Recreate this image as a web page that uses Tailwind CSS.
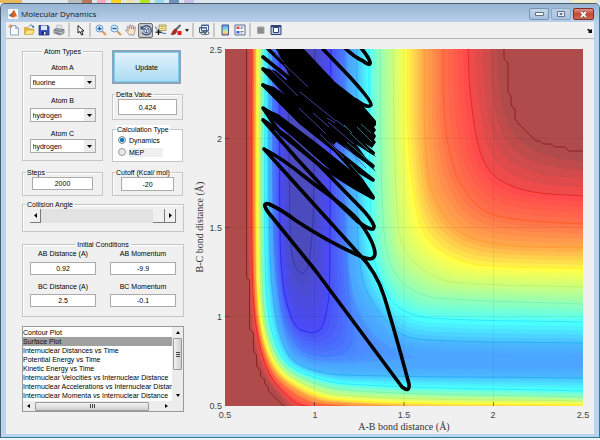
<!doctype html>
<html lang="en">
  <head>
    <meta charset="utf-8" />
    <meta name="viewport" content="width=device-width, initial-scale=1" />
    <title>Molecular Dynamics</title>
    <script src="https://cdn.jsdelivr.net/npm/@tailwindcss/browser@4"></script>
  </head>
  <body
    class="flex min-h-screen flex-col bg-[#eef4f8] font-['Liberation_Sans',sans-serif] text-[7px] leading-[9px] text-black"
  >
    <!-- strip of the window behind -->
    <div class="flex h-[3px] shrink-0 bg-[#dce6ee]">
      <div class="w-[22px] bg-[#e9b85c]"></div>
      <div class="ml-[46px] w-[14px] bg-[#bdbdbd]"></div>
      <div class="w-[10px] bg-[#b9775a]"></div>
      <div class="ml-[5px] w-[9px] bg-[#f7a8c4]"></div>
      <div class="ml-[5px] w-[10px] bg-[#ffd21c]"></div>
      <div class="ml-[5px] w-[9px] bg-[#efe4b0]"></div>
      <div class="ml-[5px] w-[10px] bg-[#b5e61d]"></div>
      <div class="ml-[5px] w-[9px] bg-[#99d9ea]"></div>
      <div class="ml-[5px] w-[10px] bg-[#7092be]"></div>
      <div class="ml-[5px] w-[10px] bg-[#c8bfe7]"></div>
      <div class="ml-auto mr-[4px] w-[24px] bg-[#f3f0c8]"></div>
    </div>

    <div
      class="flex grow flex-col rounded-t-[5px] border border-[#4b5d6b] border-r-[#1f7f98] border-b-[#2f7f92] bg-[#bcd3ee] px-[5px] pb-[3px]"
    >
      <header
        class="-mx-[5px] flex h-[18px] shrink-0 items-start rounded-t-[4px] bg-linear-to-b from-[#98b4d1] to-[#b8d0ea] pr-[5px] pl-[7px]"
      >
        <svg class="mt-[5px] h-[10px] w-[10px]" viewBox="0 0 20 20">
          <path d="M0 0h20v20H0z" fill="#f4f6f8" />
          <path d="M1 12 7 9l3 3-4 4z" fill="#4a86b8" />
          <path d="m7 9 5-7 2 4-3 8-5 2z" fill="#a33a1c" />
          <path d="M12 2c3 3 4 10 7 14-3-3-5 0-8 2l-4-3z" fill="#e2651e" />
        </svg>
        <h1
          class="mt-[4px] ml-[3px] font-['Open_Sans',sans-serif] text-[8px] leading-[11px] text-[#10151c]"
        >
          Molecular Dynamics
        </h1>
        <div class="mt-[4px] ml-auto flex gap-[2px]">
          <button
            aria-label="Minimize"
            class="flex h-[12px] w-[20px] items-center justify-center rounded-[2px] border border-[#7792ae] bg-linear-to-b from-[#c4d6ea] to-[#a6c0db]"
          >
            <svg class="h-[4px] w-[9px]" viewBox="0 0 9 4">
              <path d="M.5 .5h8v3h-8z" fill="#fff" stroke="#62748a" />
            </svg>
          </button>
          <button
            aria-label="Maximize"
            class="flex h-[12px] w-[20px] items-center justify-center rounded-[2px] border border-[#8fa9c5] bg-linear-to-b from-[#bbd0e7] to-[#a9c3df]"
          >
            <svg class="h-[6px] w-[8px]" viewBox="0 0 8 6">
              <path d="M.5 .5h7v5h-7z" fill="#e9f0f7" stroke="#62748a" />
              <path d="M3 2.500h2v1H3z" fill="#8c9fb4" stroke="#62748a" />
            </svg>
          </button>
          <button
            aria-label="Close"
            class="flex h-[12px] w-[21px] items-center justify-center rounded-[2px] border border-[#7c2f2a] bg-linear-to-b from-[#dd9186] via-[#c64734] to-[#cf6a4c]"
          >
            <svg class="h-[7px] w-[9px]" viewBox="0 0 9 7">
              <path d="m2 1 5 5m0-5L2 6" stroke="#6b3a3a" stroke-width="3" />
              <path d="m2 1 5 5m0-5L2 6" stroke="#fff" stroke-width="1.800" />
            </svg>
          </button>
        </div>
      </header>

      <main class="flex grow flex-col bg-[#f0f0f0]">
        <div
          class="flex h-[17px] shrink-0 items-center border-b border-[#b4b4b4] *:shrink-0"
        >
          <button class="grid h-[15px] w-[15px] place-items-center" aria-label="New figure">
            <svg class="h-[12px] w-[12px]" viewBox="0 0 24 24">
              <path d="M5 3h10l6 6v13H5z" fill="#f6fbff" stroke="#6f8fb0" stroke-width="1.500" />
              <path d="M15 3v6h6z" fill="#b4cde6" stroke="#6f8fb0" />
              <path d="M5 0v9M0 5h10M2 2l6 6m0-6L2 8" stroke="#e0906a" stroke-width="1.500" />
            </svg>
          </button>
          <button class="grid h-[15px] w-[15px] place-items-center" aria-label="Open file">
            <svg class="h-[12px] w-[12px]" viewBox="0 0 24 24">
              <path d="M3 20V7h7l2 3h8v10z" fill="#e9b93c" stroke="#b98a1c" />
              <path d="m3 21 4-9h16l-4 9z" fill="#ffe48a" stroke="#b98a1c" />
              <path d="M12 5c2-4 6-4 8 0" fill="none" stroke="#3e72b0" stroke-width="2" />
              <path d="m17 5 5-2v6z" fill="#3e72b0" />
            </svg>
          </button>
          <button class="grid h-[15px] w-[15px] place-items-center" aria-label="Save figure">
            <svg class="h-[12px] w-[12px]" viewBox="0 0 24 24">
              <path d="M2 3h18l2 2v17H2z" fill="#3656c0" stroke="#1c2f80" stroke-width="1.500" />
              <path d="M6 3h12v9H6z" fill="#dfe9fb" />
              <path d="M7 15h10v7H7z" fill="#20306a" />
              <path d="M12 16h3v5h-3z" fill="#fff" />
            </svg>
          </button>
          <button class="grid h-[15px] w-[15px] place-items-center" aria-label="Print figure">
            <svg class="h-[12px] w-[12px]" viewBox="0 0 24 24">
              <path d="m8 2 10 1-2 9H5z" fill="#fff" stroke="#808890" />
              <path d="m2 11 6-2 14 2v7l-7 4-13-4z" fill="#b3b8bd" stroke="#666e76" stroke-width="1.500" />
              <path d="m3 12 12 3 6-3M5 17l9 3" fill="none" stroke="#50575e" stroke-width="1.500" />
              <path d="m9 5 6 1M8 8l6 1" stroke="#90a0b0" />
            </svg>
          </button>
          <div class="mx-[2px] h-[14px] w-[2px] bg-[#c9c9c9]"></div>
          <button class="grid h-[15px] w-[15px] place-items-center" aria-label="Edit plot">
            <svg class="h-[12px] w-[12px]" viewBox="0 0 24 24">
              <path d="M8 3v15l4-3 3 7 3-1-3-7h5z" fill="#fff" stroke="#1c1c1c" stroke-width="2" />
            </svg>
          </button>
          <div class="mx-[2px] h-[14px] w-[2px] bg-[#c9c9c9]"></div>
          <button class="grid h-[15px] w-[15px] place-items-center" aria-label="Zoom in">
            <svg class="h-[12px] w-[12px]" viewBox="0 0 24 24">
              <path d="m14 14 8 8" stroke="#d9985c" stroke-width="4" />
              <circle cx="9" cy="9" r="7" fill="#d6ecfb" stroke="#6aa0cf" stroke-width="2" />
              <path d="M5 9h8M9 5v8" stroke="#1d4f9c" stroke-width="2.500" />
            </svg>
          </button>
          <button class="grid h-[15px] w-[15px] place-items-center" aria-label="Zoom out">
            <svg class="h-[12px] w-[12px]" viewBox="0 0 24 24">
              <path d="m14 14 8 8" stroke="#d9985c" stroke-width="4" />
              <circle cx="9" cy="9" r="7" fill="#d6ecfb" stroke="#6aa0cf" stroke-width="2" />
              <path d="M5 9h8" stroke="#1d4f9c" stroke-width="2.500" />
            </svg>
          </button>
          <button class="grid h-[15px] w-[15px] place-items-center" aria-label="Pan">
            <svg class="h-[12px] w-[12px]" viewBox="0 0 24 24">
              <path
                d="M9 22c-2-4-6-6-8-10 2-1 4 0 6 2L4 5c2-1 3 0 4 2l1 3V2c2-1 3 0 3 2l1 6 1-7c2-1 3 0 3 3v5l2-5c2-1 3 0 2 3l-2 8-1 5z"
                fill="#fbe3c4" stroke="#7c86a8" stroke-width="1.500"
              />
            </svg>
          </button>
          <button
            class="grid h-[15px] w-[15px] place-items-center rounded-[2px] border border-[#6e6e6e] bg-[#c8c8c8]"
            aria-label="Rotate 3D" aria-pressed="true"
          >
            <svg class="h-[12px] w-[12px]" viewBox="0 0 24 24">
              <path d="M4 8a10 9 0 1 1 0 9" fill="none" stroke="#2f4f80" stroke-width="2.500" />
              <path d="M1 3v8h8z" fill="#2f4f80" />
              <path d="m8 10 5-3 5 3v5l-5 3-5-3zm0 0 5 2 5-2m-5 2v6" fill="#eef3fa" stroke="#2f4f80" stroke-width="1.500" />
            </svg>
          </button>
          <button class="grid h-[15px] w-[15px] place-items-center" aria-label="Data cursor">
            <svg class="h-[12px] w-[12px]" viewBox="0 0 24 24">
              <path d="M8 2h14v11H8z" fill="#f5ec9a" stroke="#8c8548" stroke-width="1.500" />
              <path d="M11 5h8M11 9h8" stroke="#a39b58" stroke-width="1.500" />
              <path d="M1 5c3 10 8 13 21 14" fill="none" stroke="#3366b0" stroke-width="2" />
              <path d="M7 11v11M1 16h12" stroke="#111" stroke-width="2.500" />
            </svg>
          </button>
          <button class="grid h-[15px] w-[15px] place-items-center" aria-label="Brush data">
            <svg class="h-[12px] w-[12px]" viewBox="0 0 24 24">
              <path d="M21 2 11 12" stroke="#5d6570" stroke-width="4" />
              <path d="M12 10c-5-1-6 5-10 11 6 1 11-1 12-8z" fill="#b32a22" stroke="#5c2320" />
              <path d="M15 14h8v8h-8z" fill="#f01818" />
            </svg>
          </button>
          <button class="grid h-[15px] w-[7px] place-items-center" aria-label="Brush colours">
            <svg class="h-[3px] w-[4px]" viewBox="0 0 4 3">
              <path d="M0 0h4L2 3z" fill="#222" />
            </svg>
          </button>
          <div class="mx-[2px] h-[14px] w-[2px] bg-[#c9c9c9]"></div>
          <button class="grid h-[15px] w-[15px] place-items-center" aria-label="Link plot">
            <svg class="h-[12px] w-[12px]" viewBox="0 0 24 24">
              <path d="M7 2h14v11H7zM3 7h14v10H3z" fill="#eaf1f8" stroke="#44628a" stroke-width="2" />
              <path d="M7 3h14M3 8h14" stroke="#44628a" stroke-width="2" />
              <rect x="6" y="15" width="9" height="6" rx="3" fill="none" stroke="#5d6874" stroke-width="2" />
              <rect x="13" y="15" width="9" height="6" rx="3" fill="none" stroke="#5d6874" stroke-width="2" />
            </svg>
          </button>
          <div class="mx-[2px] h-[14px] w-[2px] bg-[#c9c9c9]"></div>
          <button class="grid h-[15px] w-[15px] place-items-center" aria-label="Insert colorbar">
            <svg class="h-[12px] w-[12px]" viewBox="0 0 24 24">
              <defs>
                <linearGradient id="bar" x2="0" y2="1">
                  <stop offset="0" stop-color="#6a8cf0" />
                  <stop offset=".4" stop-color="#6fe0e0" />
                  <stop offset=".7" stop-color="#f4e27c" />
                  <stop offset="1" stop-color="#ee8d6a" />
                </linearGradient>
              </defs>
              <path d="M6 2h13v20H6z" fill="url(#bar)" stroke="#42598c" stroke-width="2" />
            </svg>
          </button>
          <button class="grid h-[15px] w-[15px] place-items-center" aria-label="Insert legend">
            <svg class="h-[12px] w-[12px]" viewBox="0 0 24 24">
              <path d="M2 2h20v20H2z" fill="#fafcff" stroke="#546c98" stroke-width="2" />
              <path d="M5 5h6v5H5z" fill="#e2463c" />
              <path d="M5 14h6v5H5z" fill="#4258d8" />
              <path d="M13 6h6m-6 3h4m-4 6h6m-6 3h4" stroke="#555" stroke-width="1.500" />
            </svg>
          </button>
          <div class="mx-[2px] h-[14px] w-[2px] bg-[#c9c9c9]"></div>
          <button class="grid h-[15px] w-[15px] place-items-center" aria-label="Hide plot tools">
            <svg class="h-[12px] w-[12px]" viewBox="0 0 24 24">
              <path d="M5 6h13v13H5z" fill="#8c8c8c" stroke="#a8a8a8" stroke-width="2" />
            </svg>
          </button>
          <button class="grid h-[15px] w-[15px] place-items-center" aria-label="Show plot tools">
            <svg class="h-[12px] w-[12px]" viewBox="0 0 24 24">
              <path d="M2 3h20v18H2z" fill="#b8cce6" stroke="#2c4470" stroke-width="2" />
              <path d="M7 7h10v10H7z" fill="#fff" stroke="#2c4470" stroke-width="2" />
              <path d="M2 5h20" stroke="#2c4470" stroke-width="3" />
            </svg>
          </button>
          <button class="mr-[2px] ml-auto" aria-label="Dock figure">
            <svg class="h-[5px] w-[5px]" viewBox="0 0 5 5">
              <path d="M0 1h2l1 1 2-1v4H1l1-1z" fill="#111" />
            </svg>
          </button>
        </div>

        <div class="flex grow">
          <form class="flex w-[178px] shrink-0 flex-col pt-[8px] pl-[16px]">
            <div class="flex gap-[9px]">
              <div class="flex w-[81px] flex-col gap-[7px]">
                <fieldset
                  class="flex h-[114px] flex-col items-center border border-[#c6c6c6] shadow-[inset_1px_1px_0_#fff]"
                >
                  <legend class="mx-auto px-[2px]">Atom Types</legend>
                  <label for="atom-a" class="mt-[7px]">Atom A</label>
                  <div class="relative mt-[3px]">
                    <select id="atom-a" class="block h-[14px] w-[66px] appearance-none border border-[#ababab] bg-white pl-[2px]">
                      <option>fluorine</option>
                      <option>hydrogen</option>
                    </select>
                    <svg class="pointer-events-none absolute top-[1px] right-[1px] h-[12px] w-[11px] bg-[#ececec]" viewBox="0 0 11 12">
                      <path d="M3 5h5L5.500 8z" fill="#000" />
                    </svg>
                  </div>
                  <label for="atom-b" class="mt-[7px]">Atom B</label>
                  <div class="relative mt-[3px]">
                    <select id="atom-b" class="block h-[14px] w-[66px] appearance-none border border-[#ababab] bg-white pl-[2px]">
                      <option>hydrogen</option>
                      <option>fluorine</option>
                    </select>
                    <svg class="pointer-events-none absolute top-[1px] right-[1px] h-[12px] w-[11px] bg-[#ececec]" viewBox="0 0 11 12">
                      <path d="M3 5h5L5.500 8z" fill="#000" />
                    </svg>
                  </div>
                  <label for="atom-c" class="mt-[7px]">Atom C</label>
                  <div class="relative mt-[1px]">
                    <select id="atom-c" class="block h-[14px] w-[66px] appearance-none border border-[#ababab] bg-white pl-[2px]">
                      <option>hydrogen</option>
                      <option>fluorine</option>
                    </select>
                    <svg class="pointer-events-none absolute top-[1px] right-[1px] h-[12px] w-[11px] bg-[#ececec]" viewBox="0 0 11 12">
                      <path d="M3 5h5L5.500 8z" fill="#000" />
                    </svg>
                  </div>
                </fieldset>
                <fieldset class="h-[28px] border border-[#c6c6c6] px-[9px] shadow-[inset_1px_1px_0_#fff]">
                  <legend class="-ml-[6px] px-[1px]"><label for="steps">Steps</label></legend>
                  <input id="steps" value="2000" class="block h-[13px] w-full border border-[#ababab] bg-white text-center" />
                </fieldset>
              </div>

              <div class="flex w-[71px] flex-col">
                <button
                  type="button"
                  class="mt-[3px] h-[34px] w-[69px] border-2 border-[#8aa5b8] bg-linear-to-b from-[#e4f3fb] to-[#a9daf4] shadow-[inset_0_0_0_1px_#7fcdee]"
                >
                  Update
                </button>
                <fieldset class="mt-[6px] h-[30px] border border-[#c6c6c6] px-[5px] shadow-[inset_1px_1px_0_#fff]">
                  <legend class="-ml-[3px] px-[1px]"><label for="delta">Delta Value</label></legend>
                  <input id="delta" value="0.424" class="block h-[16px] w-full border border-[#ababab] bg-white text-center" />
                </fieldset>
                <fieldset class="mt-[5px] h-[37px] border border-[#c6c6c6] bg-white px-[5px]">
                  <legend class="-ml-[2px] bg-white px-[1px]">Calculation Type</legend>
                  <label class="mt-[1px] flex h-[10px] items-center gap-[3px]">
                    <input
                      type="radio" name="calc" checked
                      class="h-[8px] w-[8px] appearance-none rounded-full border border-[#8a8a8a] bg-[#e8f2f8] checked:bg-[radial-gradient(#1478b4_45%,#c4e2f2_55%)]"
                    />
                    Dynamics
                  </label>
                  <label class="mt-[2px] flex h-[10px] items-center gap-[3px]">
                    <input
                      type="radio" name="calc"
                      class="h-[8px] w-[8px] appearance-none rounded-full border border-[#9a9a9a] bg-[#e8e8e8] checked:bg-[radial-gradient(#1478b4_45%,#c4e2f2_55%)]"
                    />
                    <span class="w-[34px] bg-[#f0f0f0]">MEP</span>
                  </label>
                </fieldset>
                <fieldset class="mt-[6px] h-[28px] border border-[#c6c6c6] px-[8px] shadow-[inset_1px_1px_0_#fff]">
                  <legend class="-ml-[6px] px-[1px] whitespace-nowrap"><label for="cutoff">Cutoff (Kcal/ mol)</label></legend>
                  <input id="cutoff" value="-20" class="block h-[14px] w-full border border-[#ababab] bg-white text-center" />
                </fieldset>
              </div>
            </div>

            <fieldset class="mt-[4px] h-[32px] min-w-0 border border-[#c6c6c6] px-[7px] shadow-[inset_1px_1px_0_#fff]">
              <legend class="-ml-[4px] px-[1px]"><label for="angle">Collision Angle</label></legend>
              <div class="flex h-[14px]">
                <button type="button" aria-label="Decrease" class="grid w-[11px] shrink-0 place-items-center border-r border-b border-[#7a7a7a] bg-[#f0f0f0]">
                  <svg class="h-[5px] w-[3px]" viewBox="0 0 3 5"><path d="M3 0v5L0 2.500z" /></svg>
                </button>
                <input
                  id="angle" type="range" min="0" max="180" value="180"
                  class="h-full w-0 min-w-0 grow appearance-none bg-[#e2e2e2] [&::-webkit-slider-thumb]:h-[14px] [&::-webkit-slider-thumb]:w-[12px] [&::-webkit-slider-thumb]:appearance-none [&::-webkit-slider-thumb]:border-r [&::-webkit-slider-thumb]:border-b [&::-webkit-slider-thumb]:border-[#7a7a7a] [&::-webkit-slider-thumb]:bg-[#f0f0f0]"
                />
                <button type="button" aria-label="Increase" class="grid w-[11px] shrink-0 place-items-center border-r border-b border-[#7a7a7a] bg-[#f0f0f0]">
                  <svg class="h-[5px] w-[3px]" viewBox="0 0 3 5"><path d="M0 0v5l3-2.500z" /></svg>
                </button>
              </div>
            </fieldset>

            <fieldset
              class="mt-[8px] grid h-[77px] grid-cols-2 content-start gap-x-[14px] border border-[#c6c6c6] px-[7px] text-center shadow-[inset_1px_1px_0_#fff]"
            >
              <legend class="mx-auto px-[2px]">Initial Conditions</legend>
              <div>
                <label for="ab-dist" class="block">AB Distance (A)</label>
                <input id="ab-dist" value="0.92" class="mt-[4px] block h-[13px] w-full border border-[#ababab] bg-white text-center" />
              </div>
              <div>
                <label for="ab-mom" class="block">AB Momentum</label>
                <input id="ab-mom" value="-9.9" class="mt-[4px] block h-[13px] w-full border border-[#ababab] bg-white text-center" />
              </div>
              <div class="mt-[7px]">
                <label for="bc-dist" class="block">BC Distance (A)</label>
                <input id="bc-dist" value="2.5" class="mt-[3px] block h-[13px] w-full border border-[#ababab] bg-white text-center" />
              </div>
              <div class="mt-[7px]">
                <label for="bc-mom" class="block">BC Momentum</label>
                <input id="bc-mom" value="-0.1" class="mt-[3px] block h-[13px] w-full border border-[#ababab] bg-white text-center" />
              </div>
            </fieldset>

            <div class="mt-[9px] flex h-[86px] flex-col border border-[#9a9a9a] bg-white">
              <div class="flex min-h-0 grow">
                <select
                  size="8" aria-label="Plot type"
                  class="min-w-0 grow appearance-none overflow-hidden pt-[1px] [scrollbar-width:none]"
                >
                  <option class="min-h-0 px-0 py-[1px]">Contour Plot</option>
                  <option selected class="min-h-0 px-0 py-[1px] checked:bg-[linear-gradient(#a0a0a0,#a0a0a0)]">Surface Plot</option>
                  <option class="min-h-0 px-0 py-[1px]">Internuclear Distances vs Time</option>
                  <option class="min-h-0 px-0 py-[1px]">Potential Energy vs Time</option>
                  <option class="min-h-0 px-0 py-[1px]">Kinetic Energy vs Time</option>
                  <option class="min-h-0 px-0 py-[1px]">Internuclear Velocities vs Internuclear Distance</option>
                  <option class="min-h-0 px-0 py-[1px]">Internuclear Accelerations vs Internuclear Distance</option>
                  <option class="min-h-0 px-0 py-[1px]">Internuclear Momenta vs Internuclear Distance</option>
                </select>
                <div class="flex w-[11px] shrink-0 flex-col items-center bg-[#ececec]">
                  <svg class="my-[4px] h-[3px] w-[4px]" viewBox="0 0 4 3"><path d="M2 0l2 3H0z" /></svg>
                  <div class="flex h-[32px] w-[9px] items-center justify-center rounded-[1px] border border-[#9a9a9a] bg-linear-to-r from-[#f2f2f2] to-[#cfcfcf]">
                    <svg class="h-[5px] w-[4px]" viewBox="0 0 4 5"><path d="M0 .5h4M0 2.500h4M0 4.500h4" stroke="#444" /></svg>
                  </div>
                  <svg class="mt-auto mb-[4px] h-[3px] w-[4px]" viewBox="0 0 4 3"><path d="M0 0h4L2 3z" /></svg>
                </div>
              </div>
              <div class="flex h-[10px] shrink-0 items-center bg-[#ececec] pr-[15px] pl-[4px]">
                <svg class="h-[4px] w-[3px]" viewBox="0 0 3 4"><path d="M3 0v4L0 2z" /></svg>
                <div class="ml-[5px] flex h-[9px] w-[114px] items-center justify-center rounded-[1px] border border-[#9a9a9a] bg-linear-to-b from-[#f2f2f2] to-[#cfcfcf]">
                  <svg class="h-[4px] w-[5px]" viewBox="0 0 5 4"><path d="M.5 0v4M2.500 0v4M4.500 0v4" stroke="#444" /></svg>
                </div>
                <svg class="ml-auto h-[4px] w-[3px]" viewBox="0 0 3 4"><path d="M0 0v4l3-2z" /></svg>
              </div>
            </div>
          </form>

          <figure class="min-w-0 grow">
            <svg class="block h-auto w-full" viewBox="184 39 410 394" role="img" aria-label="Potential energy contour plot with trajectory">
              <defs>
                <clipPath id="axes-clip"><path d="M225 49h358v357H225z" /></clipPath>
              </defs>
              <g clip-path="url(#axes-clip)">
                <path d="M225 49h358v357H225z" fill="#b04b4b" />
                <g id="bands" transform="translate(225 49)"></g>
                <g id="lines" transform="translate(225 49)" fill="none"></g>
                <!-- jagged edges of the cut-off region -->
                <path
                  d="M246.500 48V278l3 2v49l4 4v18l3 4v11l4 5v5l4 4v3l4 5v3l15 15 3 1 5 4M504 49v10l4 4v29l3 4v9l4 5v8l3 5 18 18h4l3 3h8l4 3h10l4 4h15"
                  fill="none" stroke="#8f2020"
                />
                <path d="M314.500 49v357M404 49v357M493.500 49v357M225 138.500h358M225 227.500h358M225 316.500h358" stroke="#000" stroke-opacity=".06" />
                <g fill="none" stroke="#000" stroke-width="3.600" stroke-linecap="round" stroke-linejoin="round">
                  <!-- first approach and the wide swings after it -->
                  <path
                    d="M264 149 358 253C372 267 379 280 384 296C393 325 402 358 409 384Q410 393 402 387L315 270 268 212Q261 202 269 204 282 210 295 220 328 242 362 257Q375 262 375 253 374 241 358 220C345 205 325 193 305 177Q283 159 264 149"
                  />
                  <path d="M263 120 298 160 335 200 357 221Q375 234 374 226 371 218 360 207L317 163 288 137 263 120" />
                  <path d="M263 108 295 130 330 160 360 186 373 198 355 188 322 167 280 133z" />
                  <path d="M263 85 300 122 335 150 360 178 373 197M285 104 320 134 350 166 373 180 335 150 300 122" />
                  <path d="M263 85 290 103 345 142 373 166 330 135M263 69 300 99 350 138 373 153 335 128 295 103 263 69" />
                  <path d="M263 57 300 87 345 128 373 153M268 49 310 88 350 125 373 142M278 49 330 100 373 136" />
                  <path d="M323 49 348 75Q372 101 371 105Q368 109 356 100" />
                  <path d="M345 48Q354 57 363 61Q371 67 370 62Q368 56 361 48" />
                </g>
                <path d="M276 48h27l32 34 23 18 18 21v4l-2 2 2 3-2 3 2 3-2 4 2 2-4 6-8-5 12 14-20-13 20 28-26-23-15-11-23-25-30-30 8-6z" />
                <path d="M262 67l14 4 26 24 42 35 8 12-32-19-24-20zM262 83l12 4 40 28 24 24-4 6-30-22-18-16zM262 107l16 7 40 30 40 32 16 24-38-25-40-35-20-17z" />
                <path
                  d="M275 54 284 62M268 67 298 96M284 64 308 87M300 92 336 121M299 108 326 134M313 113 329 127M328 122 354 144M320 134 344 158M336 120 345 127M345 146 366 168M327 118 335 123"
                  fill="none" stroke="#4a50c0" stroke-width=".8"
                />
                <path d="M344 125 352 133M350 133 369 151M357 127 372 142M347 142 370 162M361 124 371 133M350 164 364 180" fill="none" stroke="#2a8aa0" stroke-width=".8" />
              </g>
              <path d="M314.500 406v-4M404 406v-4M493.500 406v-4M225 138.500h4M225 227.500h4M225 316.500h4" stroke="#333" stroke-opacity=".6" />
              <g font-family="'Liberation Sans', sans-serif" font-size="9" fill="#444">
                <g text-anchor="middle">
                  <text x="225" y="418">0.5</text>
                  <text x="315" y="418">1</text>
                  <text x="404" y="418">1.5</text>
                  <text x="493" y="418">2</text>
                  <text x="583" y="418">2.5</text>
                </g>
                <g text-anchor="end">
                  <text x="222" y="53">2.5</text>
                  <text x="222" y="142">2</text>
                  <text x="222" y="231">1.5</text>
                  <text x="222" y="320">1</text>
                  <text x="222" y="409">0.5</text>
                </g>
              </g>
              <g font-family="'Liberation Serif', serif" font-size="10" fill="#333" text-anchor="middle">
                <text x="404" y="430">A-B bond distance (Å)</text>
                <text transform="translate(203 227) rotate(-90)">B-C bond distance (Å)</text>
              </g>
            </svg>
          </figure>
        </div>
      </main>
    </div>
    <div class="h-[2px] shrink-0"></div>

    <script>
      // Energy levels from high to low. Each one is a channel between an outer
      // wall and an inner wall; the low ones close at the bottom.
      const levels = [
        { fill: [176, 75, 75],
          outer: [22, 0, 22, 200, 24, 270, 34, 318, 50, 344, 72, 364, 358, 385],
          inner: [279, 0, 282, 40, 292, 72, 311, 90, 330, 99, 358, 104] },
        { fill: [255, 75, 75], line: "#df1f1f",
          outer: [27, 0, 27, 200, 30, 268, 39, 312, 53, 337, 80, 357, 358, 370],
          inner: [243, 0, 245, 41, 252, 91, 262, 118, 278, 133, 308, 143, 358, 147] },
        { fill: [255, 118, 75], line: "#ff5a1a",
          outer: [28, 0, 28, 200, 31, 268, 41, 311, 56, 335, 92, 355, 358, 364],
          inner: [218, 0, 219, 64, 224, 101, 235, 134, 258, 161, 295, 171, 358, 175] },
        { fill: [255, 176, 75], line: "#ff9a24",
          outer: [30, 0, 30, 200, 33, 268, 43, 310, 60, 333, 102, 353, 358, 360],
          inner: [199, 0, 200, 91, 207, 144, 228, 178, 252, 191, 288, 197, 358, 199] },
        { fill: [255, 255, 75], line: "#fff21a",
          outer: [32, 0, 32, 200, 35, 268, 46, 309, 64, 331, 110, 350, 358, 356],
          inner: [182, 0, 183, 91, 192, 165, 202, 189, 222, 206, 252, 216, 358, 220] },
        { fill: [200, 255, 130], line: "#b9f06a",
          outer: [35, 0, 35, 200, 38, 268, 49, 308, 68, 329, 115, 346, 358, 352],
          inner: [168, 0, 170, 110, 175, 188, 185, 208, 202, 223, 228, 233, 358, 238] },
        { fill: [142, 255, 188], line: "#72f2ae",
          outer: [37, 0, 37, 200, 40, 268, 52, 307, 71, 326, 120, 341, 358, 348],
          inner: [155, 0, 156, 110, 160, 190, 170, 224, 188, 241, 212, 249, 358, 255] },
        { fill: [75, 255, 255], line: "#25e4ff",
          outer: [40, 0, 40, 200, 44, 268, 57, 308, 78, 324, 122, 335, 358, 342],
          inner: [144, 0, 145, 130, 148, 205, 163, 246, 178, 261, 205, 269, 358, 273] },
        { fill: [75, 184, 255], line: "#1fa8f5",
          outer: [44, 0, 45, 200, 51, 268, 65, 308, 88, 321, 120, 326, 358, 329],
          inner: [132, 0, 132, 150, 136, 222, 147, 252, 175, 284, 205, 291, 358, 294] },
        { fill: [75, 166, 255], steps: 1,
          outer: [46, 0, 47, 200, 54, 270, 68, 305, 90, 316, 130, 318, 358, 319],
          inner: [125, 0, 125, 150, 130, 230, 140, 262, 175, 295, 220, 303, 358, 307] },
        { fill: [75, 156, 255], steps: 3,
          outer: [47, 0, 48, 180, 53, 258, 66, 301, 86, 313, 130, 314, 190, 309],
          inner: [123, 0, 123, 171, 127, 238, 135, 264, 155, 290, 190, 309] },
        { fill: [75, 138, 255], steps: 3,
          outer: [47, 0, 48, 180, 54, 252, 64, 292, 83, 309, 115, 311, 144, 303],
          inner: [121, 0, 121, 171, 125, 238, 131, 268, 140, 292, 144, 303] },
        { fill: [75, 120, 255], line: "#3380f5",
          outer: [48, 0, 49, 180, 54, 246, 62, 280, 78, 302, 102, 308],
          inner: [119, 0, 119, 171, 123, 240, 127, 288, 122, 302, 102, 308] },
        { fill: [75, 75, 245], line: "#2222ee",
          outer: [55, 0, 55, 180, 58, 235, 66, 268, 74, 280, 86, 284],
          inner: [106, 0, 105, 180, 104, 245, 100, 270, 95, 281, 86, 284] },
        { fill: [75, 75, 190], line: "#3030b4",
          outer: [63, 0, 65, 171, 67, 205, 71, 219, 77, 225],
          inner: [90, 0, 88, 171, 85, 205, 82, 220, 77, 225] },
      ];

      // Catmull-Rom through the given points, sampled evenly by chord length
      function sample(flat, count) {
        const p = [];
        for (let i = 0; i < flat.length; i += 2) p.push([flat[i], flat[i + 1]]);
        const dense = [];
        for (let i = 0; i < p.length - 1; i++) {
          const a = p[i], b = p[i + 1];
          const d = Math.hypot(b[0] - a[0], b[1] - a[1]);
          const tangent = (j, k) => {
            const l = p[Math.max(j - 1, 0)], r = p[Math.min(j + 1, p.length - 1)];
            const span =
              Math.hypot(p[j][0] - l[0], p[j][1] - l[1]) +
              Math.hypot(r[0] - p[j][0], r[1] - p[j][1]);
            return ((r[k] - l[k]) / span) * d;
          };
          for (let s = 0; s < 20; s++) {
            const t = s / 20, t2 = t * t, t3 = t2 * t;
            dense.push([0, 1].map((k) =>
              (2 * t3 - 3 * t2 + 1) * a[k] + (t3 - 2 * t2 + t) * tangent(i, k) +
              (3 * t2 - 2 * t3) * b[k] + (t3 - t2) * tangent(i + 1, k)));
          }
        }
        dense.push(p[p.length - 1]);
        const run = [0];
        for (let i = 1; i < dense.length; i++)
          run.push(run[i - 1] + Math.hypot(dense[i][0] - dense[i - 1][0], dense[i][1] - dense[i - 1][1]));
        const out = [];
        let j = 0;
        for (let i = 0; i <= count; i++) {
          const at = (run[run.length - 1] * i) / count;
          while (j < run.length - 2 && run[j + 1] < at) j++;
          const t = (at - run[j]) / (run[j + 1] - run[j]);
          out.push([0, 1].map((k) => dense[j][k] + t * (dense[j + 1][k] - dense[j][k])));
        }
        return out;
      }

      const mix = (a, b, t) => a.map((v, i) => v + (b[i] - v) * t);
      const d = (pts) => "M" + pts.map((q) => q[0].toFixed(1) + " " + q[1].toFixed(1)).join("L");
      function add(parent, attrs) {
        const el = document.createElementNS("http://www.w3.org/2000/svg", "path");
        for (const k in attrs) el.setAttribute(k, attrs[k]);
        document.getElementById(parent).append(el);
      }

      for (const l of levels) {
        l.o = sample(l.outer, 80);
        l.i = sample(l.inner, 80);
      }
      levels.forEach((a, n) => {
        const b = levels[n + 1];
        const steps = b ? a.steps || 5 : 1;
        for (let s = 0; s < steps; s++) {
          const t = s / steps;
          const o = b ? a.o.map((q, k) => mix(q, b.o[k], t)) : a.o;
          const i = b ? a.i.map((q, k) => mix(q, b.i[k], t)) : a.i;
          const c = b ? mix(a.fill, b.fill, t) : a.fill;
          add("bands", {
            d: d(o.concat([...i].reverse())) + "Z",
            fill: `rgb(${c.map(Math.round).join(",")})`,
          });
        }
        if (a.line) {
          add("lines", { d: d(a.o), stroke: a.line, "stroke-width": 0.8 });
          add("lines", { d: d(a.i), stroke: a.line, "stroke-width": 0.8 });
        }
      });
    </script>
  </body>
</html>
